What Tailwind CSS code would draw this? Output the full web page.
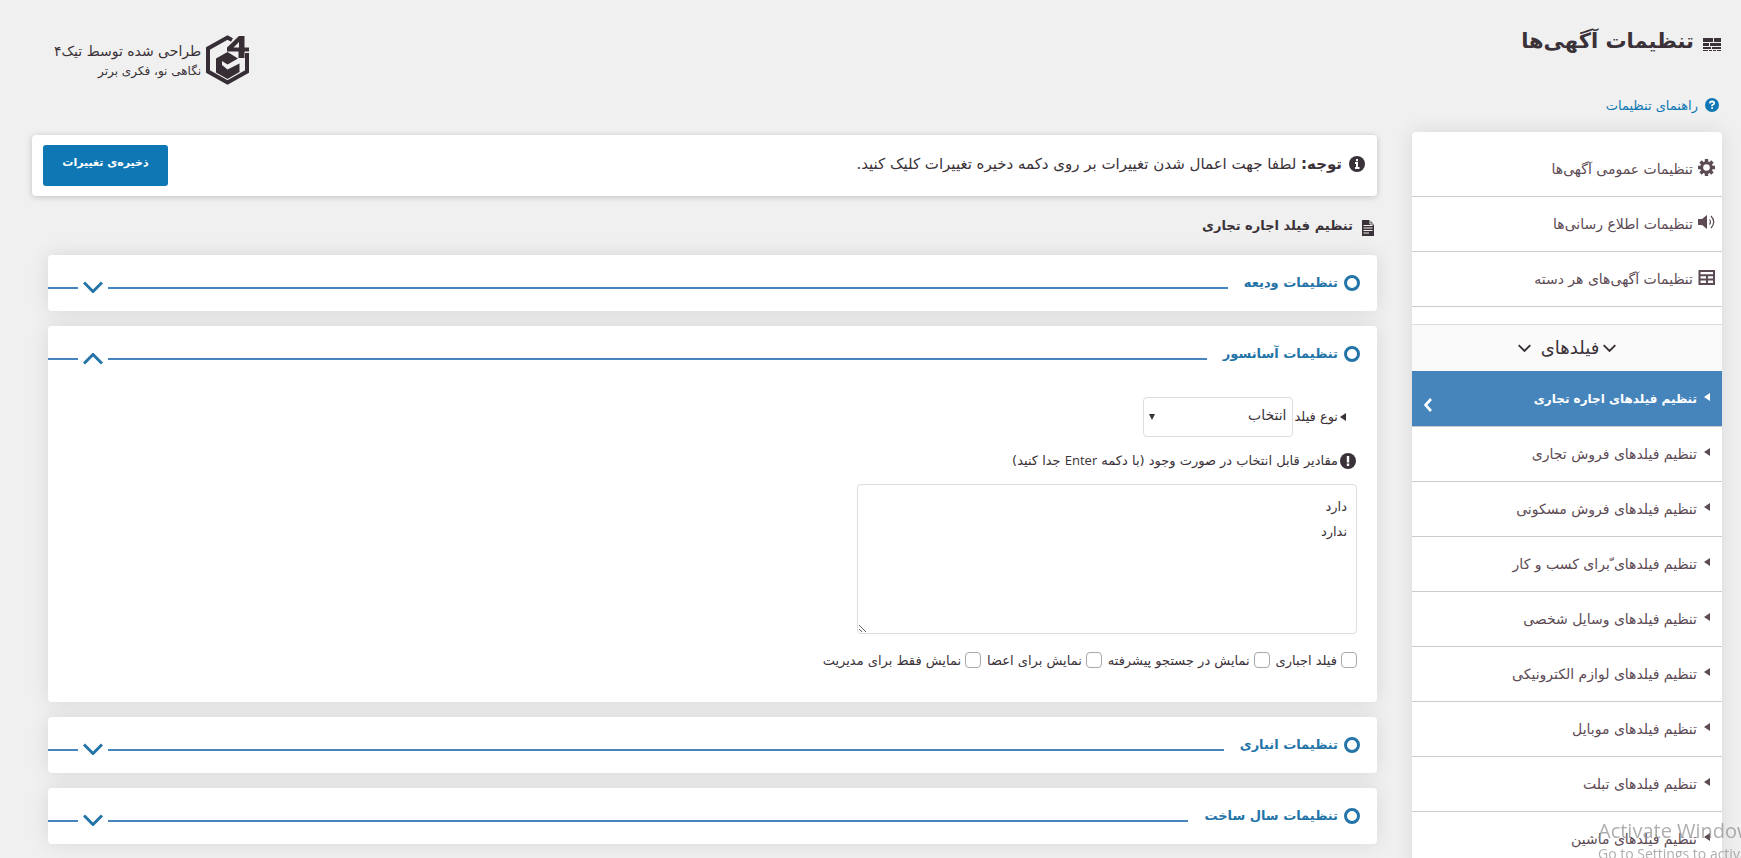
<!DOCTYPE html>
<html lang="fa" dir="rtl">
<head>
<meta charset="utf-8">
<title>تنظیمات آگهی‌ها</title>
<script src="https://cdn.jsdelivr.net/npm/@tailwindcss/browser@4"></script>
</head>
<body class="bg-[#f0f0f0] text-[#3a3238] font-['DejaVu_Sans',sans-serif]">
<svg class="hidden" aria-hidden="true">
  <symbol id="down" viewBox="0 0 20 12"><path d="M1 1.500L10 10.500L19 1.500" fill="none" stroke="currentColor" stroke-width="3"/></symbol>
  <symbol id="tri" viewBox="0 0 6 8"><path d="M0 4L6 0V8Z" fill="currentColor"/></symbol>
</svg>
<div class="flex min-h-screen overflow-hidden">
  <aside class="w-[329px] shrink-0 ps-[19px]">
    <h1 class="flex h-[84px] items-center gap-[9px] ps-[1px] text-[21px] font-bold">
      <svg class="mt-1 h-[13px] w-[18px] shrink-0" viewBox="0 0 18 13" fill="currentColor"><path d="M0 0h10v4H0zM11 0h7v4h-7zM0 5h6v3H0zM7 5h11v3H7zM0 9h8v2H0zM9 9h9v2H9zM0 12h5v1H0zM6 12h3v1H6zM10 12h3v1h-3zM14 12h4v1h-4z"/></svg>
      <span>تنظیمات آگهی‌ها</span>
    </h1>
    <a href="#" class="flex h-12 items-start gap-[7px] ps-[3px] pt-3 text-[13px] text-[#0f78b4]">
      <svg class="mt-[2px] size-[14px]" viewBox="0 0 14 14"><circle cx="7" cy="7" r="7" fill="#0f78b4"/><path d="M4.800 5.400Q5 3.300 7.100 3.300Q9.200 3.400 9.200 5.200Q9.200 6.300 7.100 7.200V8.300M7.100 9.200V11" fill="none" stroke="#fff" stroke-width="1.700"/></svg>
      <span>راهنمای تنظیمات</span>
    </a>
    <nav class="rounded-t bg-white text-sm text-[#5c4a54] shadow-[0_0_20px_rgba(0,0,0,0.1)]">
      <a href="#" class="flex h-[65px] items-center gap-[5px] border-b border-[#ccc] ps-[7px] pt-[10px]">
        <svg class="mb-1 size-[17px]" viewBox="0 0 17 17"><circle cx="8.500" cy="8.500" r="4.800" fill="none" stroke="currentColor" stroke-width="3"/><path d="M8.500 0V3.500M8.500 13.500V17M0 8.500H3.500M13.500 8.500H17M2.500 2.500L5 5M12 12L14.500 14.500M2.500 14.500L5 12M12 5L14.500 2.500" stroke="currentColor" stroke-width="3.400"/></svg>
        <span>تنظیمات عمومی آگهی‌ها</span>
      </a>
      <a href="#" class="flex h-[55px] items-center gap-[5px] border-b border-[#ccc] ps-[7px]">
        <svg class="mb-1 h-[14px] w-[17px]" viewBox="0 0 17 14"><path d="M0 4H4L9 0V14L4 10H0Z" fill="currentColor"/><path d="M11.500 4.500Q13.500 7 11.500 9.500M13 1Q18.500 7 13 13" fill="none" stroke="currentColor" stroke-width="1.200"/></svg>
        <span>تنظیمات اطلاع رسانی‌ها</span>
      </a>
      <a href="#" class="flex h-[55px] items-center gap-[5px] border-b border-[#ccc] ps-[7px]">
        <svg class="mb-1 h-[15px] w-[17px]" viewBox="0 0 17 15"><path d="M1.500 1H16V14H1.500ZM1.500 5.300H16M1.500 9.600H16M9 5.300V14" fill="none" stroke="currentColor" stroke-width="2"/></svg>
        <span>تنظیمات آگهی‌های هر دسته</span>
      </a>
      <div class="mt-[17px] flex h-[47px] items-center justify-center gap-1 border-t border-[#ddd] bg-[#fafafa] text-lg text-[#3a3238]">
        <svg class="h-2 w-[13px]"><use href="#down"/></svg><span>فیلدهای</span><svg class="ms-[6px] h-2 w-[13px]"><use href="#down"/></svg>
      </div>
      <a href="#" class="flex h-14 items-center gap-[7px] border-b border-[#ccc] bg-[#4685bb] ps-3 pe-3 text-xs font-bold text-white">
        <svg class="mb-1 h-2 w-[6px]"><use href="#tri"/></svg><span>تنظیم فیلدهای اجاره تجاری</span>
        <svg class="ms-auto mt-3 h-[14px] w-[8px]" viewBox="0 0 8 14"><path d="M7 1L1.500 7L7 13" fill="none" stroke="currentColor" stroke-width="2.600"/></svg>
      </a>
      <a href="#" class="flex h-[55px] items-center gap-[7px] border-b border-[#ccc] ps-3"><svg class="mb-1 h-2 w-[6px]"><use href="#tri"/></svg><span>تنظیم فیلدهای فروش تجاری</span></a>
      <a href="#" class="flex h-[55px] items-center gap-[7px] border-b border-[#ccc] ps-3"><svg class="mb-1 h-2 w-[6px]"><use href="#tri"/></svg><span>تنظیم فیلدهای فروش مسکونی</span></a>
      <a href="#" class="flex h-[55px] items-center gap-[7px] border-b border-[#ccc] ps-3"><svg class="mb-1 h-2 w-[6px]"><use href="#tri"/></svg><span>تنظیم فیلدهای ّبرای کسب و کار</span></a>
      <a href="#" class="flex h-[55px] items-center gap-[7px] border-b border-[#ccc] ps-3"><svg class="mb-1 h-2 w-[6px]"><use href="#tri"/></svg><span>تنظیم فیلدهای وسایل شخصی</span></a>
      <a href="#" class="flex h-[55px] items-center gap-[7px] border-b border-[#ccc] ps-3"><svg class="mb-1 h-2 w-[6px]"><use href="#tri"/></svg><span>تنظیم فیلدهای لوازم الکترونیکی</span></a>
      <a href="#" class="flex h-[55px] items-center gap-[7px] border-b border-[#ccc] ps-3"><svg class="mb-1 h-2 w-[6px]"><use href="#tri"/></svg><span>تنظیم فیلدهای موبایل</span></a>
      <a href="#" class="flex h-[55px] items-center gap-[7px] border-b border-[#ccc] ps-3"><svg class="mb-1 h-2 w-[6px]"><use href="#tri"/></svg><span>تنظیم فیلدهای تبلت</span></a>
      <a href="#" class="flex h-[55px] items-center gap-[7px] border-b border-[#ccc] ps-3"><svg class="mb-1 h-2 w-[6px]"><use href="#tri"/></svg><span>تنظیم فیلدهای ماشین</span></a>
    </nav>
  </aside>
  <main class="min-w-0 grow ps-[35px] pe-8">
    <header class="flex h-[135px] justify-end pt-[35px] pe-[22px]">
      <div class="flex items-start gap-[5px]">
        <svg class="h-[50px] w-[43px]" viewBox="0 0 43 50"><path d="M26 5L21.500 2.500L2 13.500V36.500L21.500 47.500L41 36.500V18" fill="none" stroke="#362d35" stroke-width="4"/><path d="M21.500 17L32 23.500L21.500 29.500L16 26V30L21.500 34.500L33.500 28.500V37L21.500 44L10 37.500V23.500Z" fill="#362d35"/><path d="M33 1H38.500V12.500H43V16.500H38.500V23H32.500V16.500H21V12.500ZM33 7L27.500 12.500H33Z" fill="#362d35" fill-rule="evenodd"/></svg>
        <div class="pt-1">
          <p class="text-sm leading-6">طراحی شده توسط تیک۴</p>
          <p class="text-xs leading-4">نگاهی نو، فکری برتر</p>
        </div>
      </div>
    </header>
    <div class="flex h-[61px] items-center rounded bg-white ps-3 pe-[11px] shadow-[0_1px_6px_rgba(0,0,0,0.2)]">
      <svg class="mb-1 size-4" viewBox="0 0 16 16"><circle cx="8" cy="8" r="8" fill="currentColor"/><path d="M8 3V5.200M6 7H8V12M6 12H10.500" fill="none" stroke="#fff" stroke-width="2"/></svg>
      <p class="ms-[7px] pb-[2px] text-[15px]"><strong>توجه:</strong> لطفا جهت اعمال شدن تغییرات بر روی دکمه دخیره تغییرات کلیک کنید.</p>
      <button class="ms-auto h-[41px] w-[125px] rounded-[3px] bg-[#0f78b4] pb-1 text-[11px] font-bold text-white">ذخیره‌ی تغییرات</button>
    </div>
    <h2 class="flex h-[59px] items-center gap-[9px] ps-[3px] text-[13px] font-bold">
      <svg class="mt-1 h-4 w-3" viewBox="0 0 12 16"><path d="M0 0H7.500L12 4.500V16H0Z" fill="currentColor"/><path d="M8 0V4H12M1.500 5.500H10.500M1.500 8H10.500M1.500 10.500H10.500M1.500 13H7" fill="none" stroke="#f0f0f0" stroke-width="1"/></svg>
      <span>تنظیم فیلد اجاره تجاری</span>
    </h2>
    <div class="flex flex-col gap-[15px] pe-4">
      <section class="rounded bg-white shadow-[0_0_20px_rgba(0,0,0,0.1)]">
        <button class="flex h-14 w-full items-center ps-[17px] text-[13px] font-bold text-[#2474a8]"><span class="size-4 rounded-full border-3"></span><span class="ms-[6px]">تنظیمات ودیعه</span><span class="ms-4 mt-[10px] h-[2px] grow bg-[#4685bb]"></span><svg class="mx-[5px] mt-2 h-3 w-5"><use href="#down"/></svg><span class="mt-[10px] h-[2px] w-[30px] bg-[#4685bb]"></span></button>
      </section>
      <section class="rounded bg-white pb-8 shadow-[0_0_20px_rgba(0,0,0,0.1)]">
        <button class="flex h-14 w-full items-center ps-[17px] text-[13px] font-bold text-[#2474a8]"><span class="size-4 rounded-full border-3"></span><span class="ms-[6px]">تنظیمات آسانسور</span><span class="ms-4 mt-[10px] h-[2px] grow bg-[#4685bb]"></span><svg class="mx-[5px] mt-[10px] h-3 w-5 rotate-180"><use href="#down"/></svg><span class="mt-[10px] h-[2px] w-[30px] bg-[#4685bb]"></span></button>
        <div class="ps-5 pt-[15px] text-[13px]">
          <div class="flex items-center ps-[11px]">
            <svg class="me-[2px] h-2 w-[6px]"><use href="#tri"/></svg>
            <label for="kind">نوع فیلد</label>
            <div class="relative ms-[2px]">
              <select id="kind" class="h-10 w-[150px] appearance-none rounded border border-[#ddd] bg-white ps-[5px] pb-1 text-sm"><option>انتخاب</option></select>
              <svg class="pointer-events-none absolute end-[6px] top-[17px] h-[6px] w-[6px]" viewBox="0 0 6 6"><path d="M0 0H6L3 6Z" fill="currentColor"/></svg>
            </div>
          </div>
          <div class="mt-[14px] flex items-center">
            <svg class="ms-[1px] size-4" viewBox="0 0 16 16"><circle cx="8" cy="8" r="8" fill="currentColor"/><path d="M8 3V9.500M8 10.500V13" stroke="#fff" stroke-width="2.400"/></svg>
            <label for="vals" class="ms-[2px]">مقادیر قابل انتخاب در صورت وجود (با دکمه <span class="font-['Open_Sans']">Enter</span> جدا کنید)</label>
          </div>
          <textarea id="vals" class="mt-[13px] block h-[150px] w-[500px] resize rounded border border-[#ddd] px-[9px] py-[9px] text-[13px] leading-[25px]">دارد
ندارد</textarea>
          <div class="mt-[17px] flex items-center gap-[6px]">
            <label class="flex items-center gap-1"><input type="checkbox" class="size-4 appearance-none rounded border border-[#a8a8a8] bg-white">فیلد اجباری</label>
            <label class="flex items-center gap-1"><input type="checkbox" class="size-4 appearance-none rounded border border-[#a8a8a8] bg-white">نمایش در جستجو پیشرفته</label>
            <label class="flex items-center gap-1"><input type="checkbox" class="size-4 appearance-none rounded border border-[#a8a8a8] bg-white">نمایش برای اعضا</label>
            <label class="flex items-center gap-1"><input type="checkbox" class="size-4 appearance-none rounded border border-[#a8a8a8] bg-white">نمایش فقط برای مدیریت</label>
          </div>
        </div>
      </section>
      <section class="rounded bg-white shadow-[0_0_20px_rgba(0,0,0,0.1)]">
        <button class="flex h-14 w-full items-center ps-[17px] text-[13px] font-bold text-[#2474a8]"><span class="size-4 rounded-full border-3"></span><span class="ms-[6px]">تنظیمات انباری</span><span class="ms-4 mt-[10px] h-[2px] grow bg-[#4685bb]"></span><svg class="mx-[5px] mt-2 h-3 w-5"><use href="#down"/></svg><span class="mt-[10px] h-[2px] w-[30px] bg-[#4685bb]"></span></button>
      </section>
      <section class="rounded bg-white shadow-[0_0_20px_rgba(0,0,0,0.1)]">
        <button class="flex h-14 w-full items-center ps-[17px] text-[13px] font-bold text-[#2474a8]"><span class="size-4 rounded-full border-3"></span><span class="ms-[6px]">تنظیمات سال ساخت</span><span class="ms-4 mt-[10px] h-[2px] grow bg-[#4685bb]"></span><svg class="mx-[5px] mt-2 h-3 w-5"><use href="#down"/></svg><span class="mt-[10px] h-[2px] w-[30px] bg-[#4685bb]"></span></button>
      </section>
    </div>
  </main>
</div>
<div dir="ltr" class="pointer-events-none fixed right-0 bottom-0 h-10 w-[143px] overflow-hidden whitespace-nowrap font-['Open_Sans',sans-serif] text-[#8c8c8c]/70">
  <p class="text-xl leading-[26px]">Activate Windows</p>
  <p class="text-sm leading-5">Go to Settings to activate Windows.</p>
</div>
</body>
</html>
